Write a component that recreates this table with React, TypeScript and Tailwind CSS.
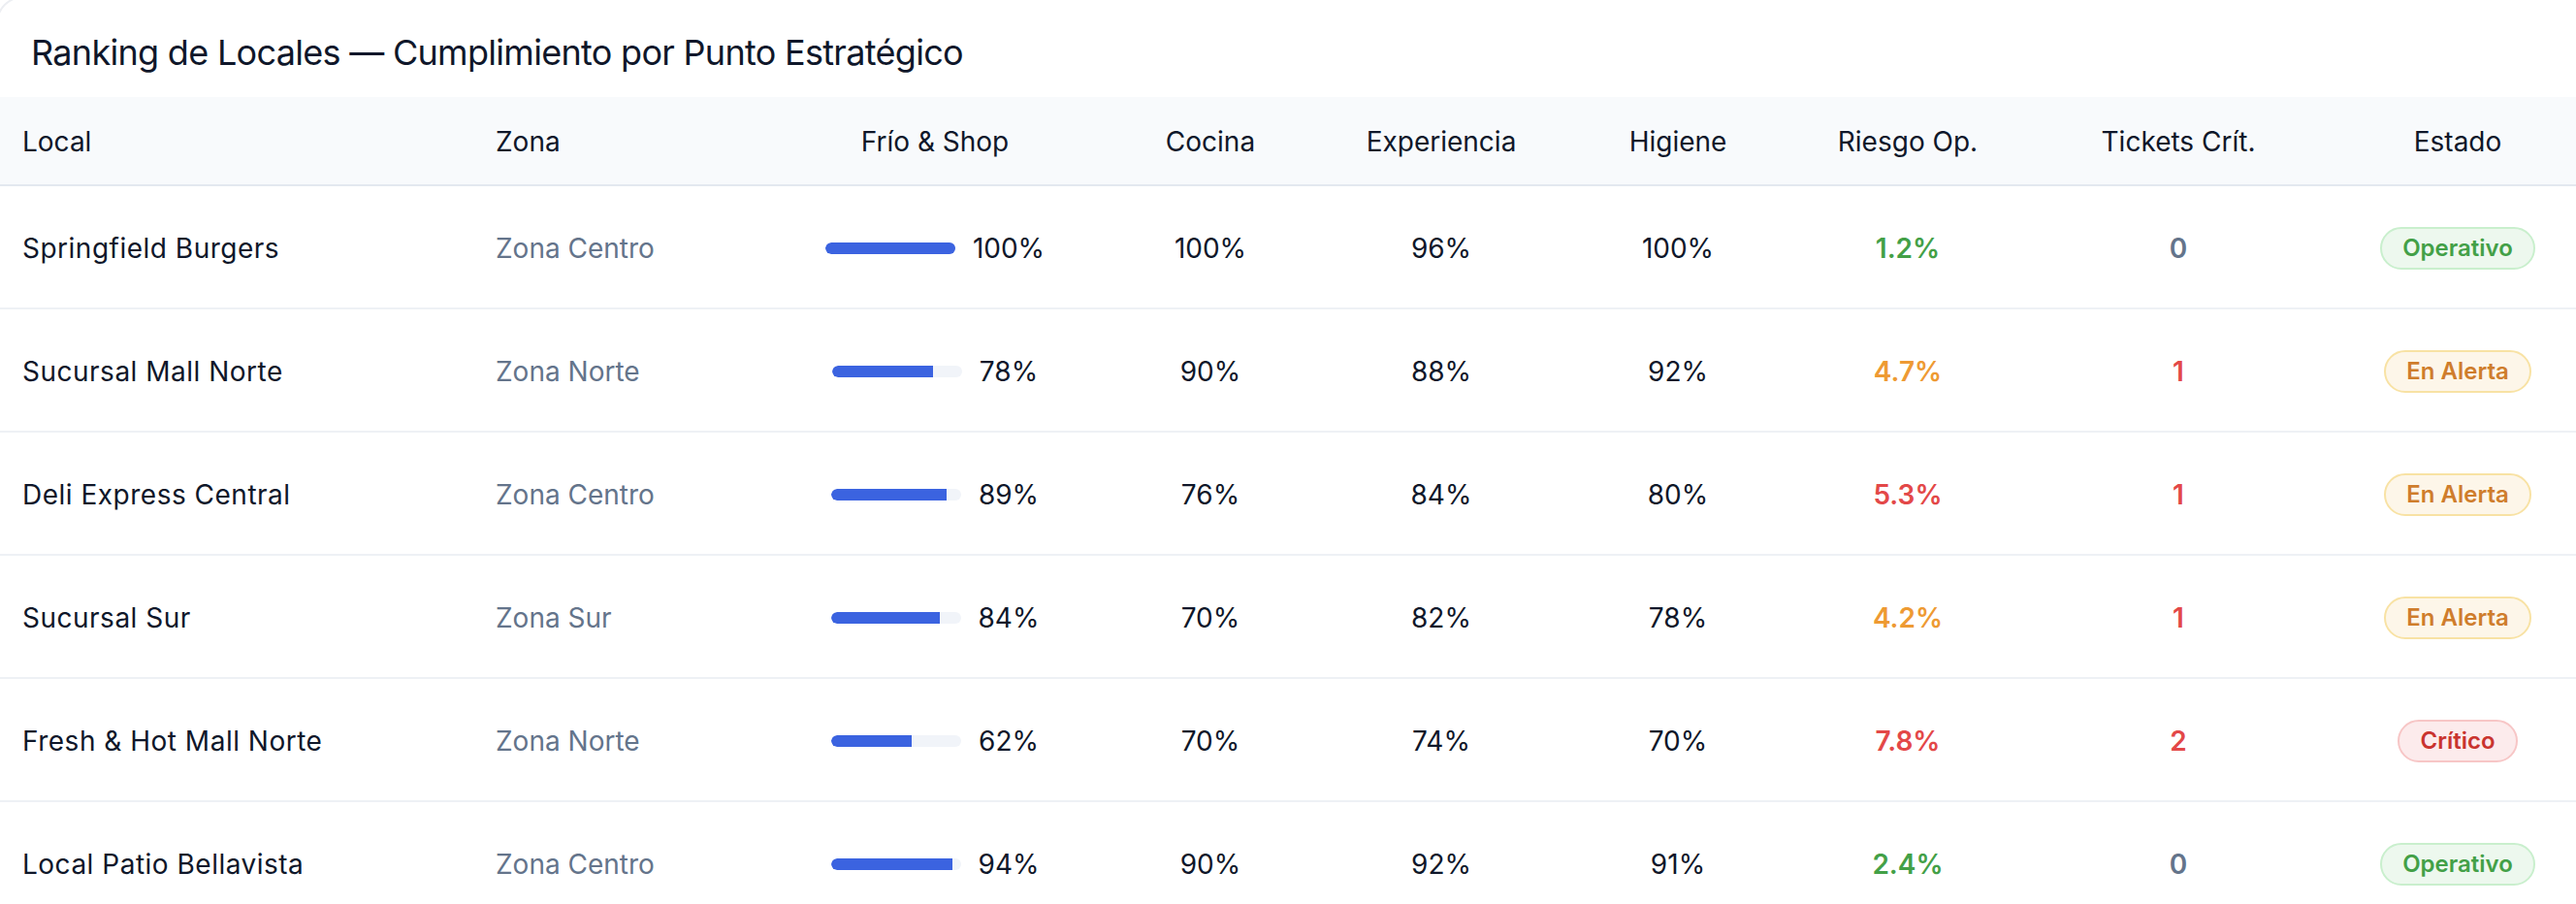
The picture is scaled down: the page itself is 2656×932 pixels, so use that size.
import React from "react";

type Row = {
  local: string;
  zona: string;
  frio: number;
  cocina: number;
  experiencia: number;
  higiene: number;
  riesgo: string;
  riesgoLevel: "ok" | "warn" | "bad";
  tickets: number;
  estado: "Operativo" | "En Alerta" | "Crítico";
};

const rows: Row[] = [
  { local: "Springfield Burgers", zona: "Zona Centro", frio: 100, cocina: 100, experiencia: 96, higiene: 100, riesgo: "1.2%", riesgoLevel: "ok", tickets: 0, estado: "Operativo" },
  { local: "Sucursal Mall Norte", zona: "Zona Norte", frio: 78, cocina: 90, experiencia: 88, higiene: 92, riesgo: "4.7%", riesgoLevel: "warn", tickets: 1, estado: "En Alerta" },
  { local: "Deli Express Central", zona: "Zona Centro", frio: 89, cocina: 76, experiencia: 84, higiene: 80, riesgo: "5.3%", riesgoLevel: "bad", tickets: 1, estado: "En Alerta" },
  { local: "Sucursal Sur", zona: "Zona Sur", frio: 84, cocina: 70, experiencia: 82, higiene: 78, riesgo: "4.2%", riesgoLevel: "warn", tickets: 1, estado: "En Alerta" },
  { local: "Fresh & Hot Mall Norte", zona: "Zona Norte", frio: 62, cocina: 70, experiencia: 74, higiene: 70, riesgo: "7.8%", riesgoLevel: "bad", tickets: 2, estado: "Crítico" },
  { local: "Local Patio Bellavista", zona: "Zona Centro", frio: 94, cocina: 90, experiencia: 92, higiene: 91, riesgo: "2.4%", riesgoLevel: "ok", tickets: 0, estado: "Operativo" },
];

const cols =
  "grid grid-cols-[490px_292px_368px_200px_276px_212px_262px_296px_280px] items-center";

const riesgoColor = {
  ok: "text-[#43a047]",
  warn: "text-[#ee9a33]",
  bad: "text-[#e34848]",
};

const badgeStyle = {
  Operativo: "bg-[#edf8ee] border-[#c9efcd] text-[#43a047]",
  "En Alerta": "bg-[#fdf6e9] border-[#f8e2a4] text-[#cf7d2c]",
  Crítico: "bg-[#fcebec] border-[#f7c6c6] text-[#c9342f]",
};

const Bar = ({ value }: { value: number }) => (
  <div className="flex items-center justify-center gap-[18px]">
    <div className="h-[12px] w-[134px] overflow-hidden rounded-full bg-[#f1f4f9]">
      <div className="h-full rounded-l-full bg-[#3b63e0]" style={{ width: `${value}%` }} />
    </div>
    <span>{value}%</span>
  </div>
);

export default function App() {
  return (
    <div
      className="h-[932px] w-[2656px] overflow-hidden bg-white text-[#0f172a]"
      style={{ fontFamily: "Inter, 'Noto Sans', sans-serif" }}
    >
      <div className="-ml-[4px] -mr-[60px] -mt-[4px] rounded-[28px] border-2 border-[#eceef2] bg-white">
        {/* Title */}
        <div className="pl-[34px] pt-[31px] pb-[21px] text-[36px] leading-[50px] tracking-[-0.7px]">
          Ranking de Locales — Cumplimiento por Punto Estratégico
        </div>

        {/* Header */}
        <div className={`${cols} h-[92px] border-b-2 border-[#e3e8ef] bg-[#f8fafc] pt-[2px] text-[28px]`}>
          <div className="pl-[25px]">Local</div>
          <div className="pl-[23px]">Zona</div>
          <div className="text-center">Frío &amp; Shop</div>
          <div className="text-center">Cocina</div>
          <div className="text-center">Experiencia</div>
          <div className="text-center">Higiene</div>
          <div className="text-center">Riesgo Op.</div>
          <div className="text-center">Tickets Crít.</div>
          <div className="text-center">Estado</div>
        </div>

        {/* Rows */}
        {rows.map((r) => (
          <div key={r.local} className={`${cols} h-[127px] border-b-2 border-[#eef1f5] pt-[2px] text-[28px]`}>
            <div className="pl-[25px] tracking-[0.5px]">{r.local}</div>
            <div className="pl-[23px] text-[#64748b]">{r.zona}</div>
            <Bar value={r.frio} />
            <div className="text-center">{r.cocina}%</div>
            <div className="text-center">{r.experiencia}%</div>
            <div className="text-center">{r.higiene}%</div>
            <div className={`text-center font-semibold ${riesgoColor[r.riesgoLevel]}`}>{r.riesgo}</div>
            <div className={`text-center font-semibold ${r.tickets === 0 ? "text-[#64748b]" : "text-[#e34848]"}`}>
              {r.tickets}
            </div>
            <div className="flex justify-center">
              <span
                className={`inline-flex h-[44px] items-center rounded-full border-2 px-[21px] text-[24px] font-semibold ${badgeStyle[r.estado]}`}
              >
                {r.estado}
              </span>
            </div>
          </div>
        ))}
      </div>
    </div>
  );
}
